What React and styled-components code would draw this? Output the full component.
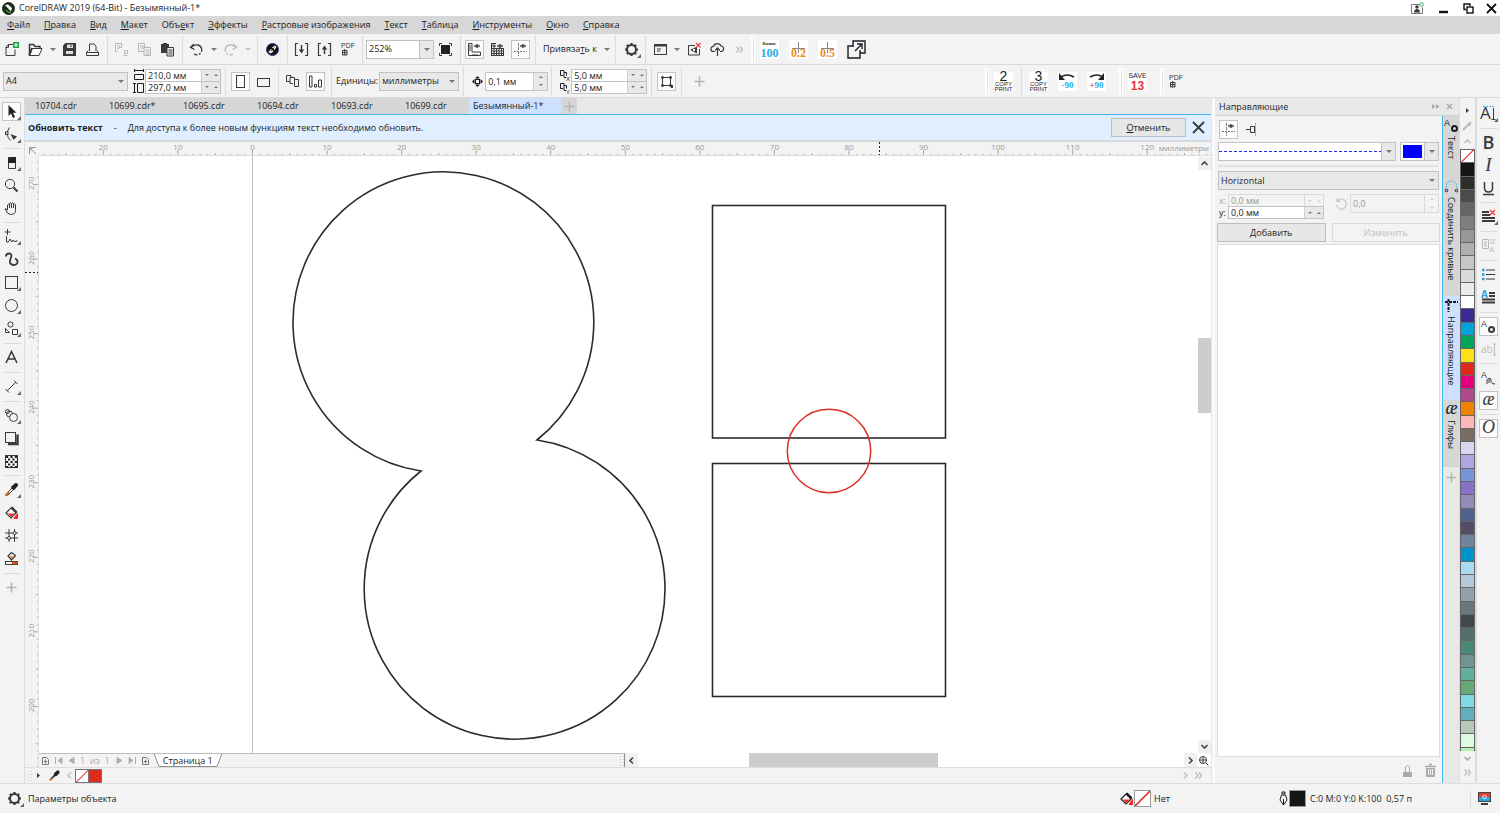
import React from 'react';
import styled, { createGlobalStyle, css } from 'styled-components';

const INK = '#3a3a3a';
const PALE = '#b9b9b9';
const LINE = '#c2c2c2';
const BLUE = '#42b8f2';

const Global = createGlobalStyle`
  *, *::before, *::after { box-sizing: border-box; }
  html, body, #root { height: 100%; }
  body { margin: 0; overflow: hidden; background: #f3f3f3; }
  body, button, input, select { font: 9px/12px "Open Sans", "Noto Sans", sans-serif; color: #1c1c24; }
  button { margin: 0; padding: 0; border: 0; background: none; white-space: nowrap; }
  svg { display: block; flex: none; }
`;

/* ---------- shell ---------- */

const Shell = styled.div`
  height: 100vh;
  display: flex;
  flex-direction: column;
`;
const TitleBar = styled.header`
  height: 16px;
  flex: none;
  background: #fff;
  display: flex;
  align-items: center;
  padding: 0 5px 0 2px;
`;
const AppTitle = styled.h1`
  margin: 0 auto 0 4px;
  font-size: 9px;
  font-weight: 400;
`;
const WindowButtons = styled.div`
  display: flex;
  align-items: center;
  gap: 14px;
`;
const MenuBar = styled.nav`
  height: 18px;
  flex: none;
  background: #d7d7d7;
  display: flex;
  align-items: center;
  gap: 14px;
  padding: 0 7px;
`;
const MenuItem = styled.button`
  font-size: 9px;
`;
const ToolBar = styled.div`
  height: ${(p) => p.$h}px;
  flex: none;
  display: flex;
  align-items: center;
  border-bottom: 1px solid #dadada;
  padding-left: ${(p) => p.$pad}px;
`;
const Main = styled.main`
  flex: 1;
  min-height: 0;
  display: flex;
`;

/* ---------- small parts ---------- */

const IconButton = styled.button`
  position: relative;
  flex: none;
  width: 19px;
  height: 19px;
  margin: 2px;
  display: flex;
  align-items: center;
  justify-content: center;
  border: 1px solid ${(p) => (p.$on ? '#c4c4c4' : 'transparent')};
  background: ${(p) => (p.$on ? '#fcfcfc' : 'transparent')};
  color: ${(p) => (p.disabled ? PALE : INK)};
  ${(p) => p.$fly && css`
    &::after {
      content: '';
      position: absolute;
      right: -1px;
      bottom: 0;
      border: 2px solid transparent;
      border-right-color: #666;
      border-bottom-color: #666;
    }
  `}
`;
const PlainButton = styled.button`
  flex: none;
  width: ${(p) => p.$w || 16}px;
  display: flex;
  align-items: center;
  justify-content: center;
  color: ${(p) => (p.$pale ? PALE : INK)};
`;
const Sep = styled.span`
  flex: none;
  width: ${(p) => p.$w || 6}px;
  height: ${(p) => p.$h || 29}px;
  display: flex;
  justify-content: center;
  &::before { content: ''; width: 1px; background: #dcdcdc; }
`;
const Grip = styled.span`
  flex: none;
  width: 4px;
  height: 27px;
  border: 1px solid #fff;
  border-left-width: 2px;
  background: #e2e2e2;
  margin-left: ${(p) => p.$gap || 0}px;
`;
const Rule = styled.span`
  flex: none;
  height: ${(p) => (p.$tight ? 5 : 6)}px;
  width: 17px;
  margin-left: 4px;
  display: flex;
  align-items: center;
  &::before { content: ''; flex: 1; height: 1px; background: #dcdcdc; }
`;
const Tri = styled.i`
  flex: none;
  width: 0;
  height: 0;
  border: ${(p) => p.$s || 3}px solid transparent;
  ${(p) => (p.$up
    ? css`border-top-width: 0; border-bottom-color: ${p.$c || '#777'};`
    : css`border-bottom-width: 0; border-top-color: ${p.$c || '#777'};`)}
`;
const DropArrow = ({ label, pale }) => (
  <PlainButton $w={11} aria-label={label} disabled={pale}><Tri $c={pale ? '#c8c8c8' : '#777'} /></PlainButton>
);

const SelectBox = styled.span`
  position: relative;
  flex: none;
  display: flex;
  width: ${(p) => p.$w};
  height: 19px;
  border: 1px solid ${LINE};
  background: ${(p) => (p.$white ? '#fff' : '#e8e8e8')};
  select {
    appearance: none;
    width: 100%;
    border: 0;
    background: none;
    padding: 0 12px 0 2px;
    outline: none;
  }
  &::before {
    content: '';
    position: absolute;
    inset: 0 0 0 auto;
    width: 14px;
    background: #e8e8e8;
    border-left: ${(p) => (p.$white ? `1px solid ${LINE}` : 0)};
    pointer-events: none;
  }
  &::after {
    content: '';
    position: absolute;
    right: 3px;
    top: 7px;
    border: 3px solid transparent;
    border-bottom-width: 0;
    border-top-color: #777;
    pointer-events: none;
  }
`;
const Select = ({ label, value, w, white, id }) => (
  <SelectBox $w={w} $white={white}>
    <select id={id} aria-label={label} defaultValue={value}><option>{value}</option></select>
  </SelectBox>
);

const FieldBox = styled.span`
  flex: none;
  display: flex;
  width: ${(p) => p.$w}px;
  height: ${(p) => (p.$tall ? 19 : 13)}px;
  border: 1px solid ${(p) => (p.$off ? '#dadada' : LINE)};
  background: ${(p) => (p.$off ? '#f3f3f3' : '#fff')};
  input {
    flex: 1;
    min-width: 0;
    border: 0;
    padding: 0 0 0 2px;
    background: none;
    outline: none;
    line-height: 11px;
  }
  input:disabled { color: #999; }
`;
const Spin = styled.span`
  flex: none;
  display: flex;
  flex-direction: ${(p) => (p.$tall ? 'column' : 'row')};
  width: ${(p) => (p.$tall ? 14 : 19)}px;
  border-left: 1px solid ${(p) => (p.$off ? '#dadada' : '#d0d0d0')};
  background: ${(p) => (p.$off ? '#f3f3f3' : '#e8e8e8')};
  button { flex: 1; display: flex; align-items: center; justify-content: center; }
`;
const NumField = ({ id, label, value, w, tall, off }) => {
  const c = off ? '#cfcfcf' : '#777';
  return (
    <FieldBox $w={w} $tall={tall} $off={off}>
      <input id={id} type="text" aria-label={label} defaultValue={value} disabled={off} />
      <Spin $tall={tall} $off={off}>
        <button aria-label={tall ? 'Больше' : 'Меньше'} disabled={off}><Tri $s={2} $up={tall} $c={c} /></button>
        <button aria-label={tall ? 'Меньше' : 'Больше'} disabled={off}><Tri $s={2} $up={!tall} $c={c} /></button>
      </Spin>
    </FieldBox>
  );
};
const FieldStack = styled.div`
  flex: none;
  display: flex;
  flex-direction: column;
  & > :nth-child(2) { margin-top: -1px; }
`;
const IconStack = styled.div`
  flex: none;
  display: flex;
  flex-direction: column;
  gap: 1px;
  margin: 0 0 0 ${(p) => p.$l || 0}px;
`;

/* ---------- icons ---------- */

const Ico = ({ s = 15, w, h, sw = 1, children, ...rest }) => (
  <svg width={w || s} height={h || s} viewBox={`0 0 ${w || s} ${h || s}`} overflow="visible" fill="none" stroke="currentColor" strokeWidth={sw} aria-hidden="true" {...rest}>
    {children}
  </svg>
);
const F = { fill: 'currentColor', stroke: 'none' };

const PdfIcon = () => (
  <Ico>
    <text x="1" y="6" fontSize="7" {...F} fontFamily="Liberation Sans, sans-serif">PDF</text>
    <path d="M2.5 8.500h4.500v4.500h-4.500zM4.700 7v6M2.500 10.700h4.500" />
  </Ico>
);
const EyeIcon = () => (
  <g strokeWidth=".8"><path d="M7 4q3-3 6 0q-3 3-6 0z" /><circle cx="10" cy="4" r="1" fill="currentColor" /></g>
);
const GearIcon = () => (
  <Ico>
    <circle cx="7.500" cy="7.500" r="4.500" strokeWidth="2" />
    <path strokeWidth="2.200" d="M7.500 1v2M7.500 12v2M1 7.500h2M12 7.500h2M2.900 2.900l1.400 1.400M10.700 10.700l1.400 1.400M2.900 12.100l1.400-1.400M10.700 4.300l1.400-1.400" />
  </Ico>
);
const DropperIcon = () => (
  <Ico>
    <path d="M2.500 11.500l6-6 1.500 1.500-6 6-2 .5z" fill="#eee" />
    <path d="M1.500 13.500l3.500-3.500" stroke="#d96a1c" strokeWidth="2" />
    <path d="M7.500 4l3.500 3.500" strokeWidth="1.500" />
    <path d="M9.500 5.500l2.500-2.500" strokeWidth="4" stroke="#222" strokeLinecap="round" />
  </Ico>
);
const BucketIcon = () => (
  <Ico>
    <path d="M2 8l5.500-5.500 5 5-5.500 5.500z" fill="#fff" strokeWidth="1.200" />
    <path d="M7.500 2.500l5 5" strokeWidth="2.500" />
    <path d="M4 8.500h6.500l-3.500 3.500z" fill="#f22" stroke="none" />
    <path d="M13.500 8.500v5h-3.500z" fill="#f22" stroke="#f22" />
  </Ico>
);
const GuidesIcon = () => (
  <Ico><path d="M5.500 1v13" strokeDasharray="3 1" stroke="#777" /><path d="M1 9.500h13" strokeDasharray="2 1" stroke="#777" /><EyeIcon /></Ico>
);
const Chevron = ({ d, c = '#444' }) => (
  <Ico s={9} sw={1.6} stroke={c}>
    <path d={{ up: 'M1.500 6l3-3 3 3', down: 'M1.500 3l3 3 3-3', left: 'M6 1.500l-3 3 3 3', right: 'M3 1.500l3 3-3 3' }[d]} />
  </Ico>
);
const DoubleChevron = () => (
  <Ico s={9} sw={1.2}><path d="M1.500 1.500l2.500 3-2.500 3M5 1.500l2.500 3-2.500 3" /></Ico>
);
const PlusIcon = () => <Ico s={11} sw={1.6} stroke="#b5b5b5"><path d="M5.500 .5v10M.5 5.500h10" /></Ico>;
const ScriptIcon = ({ children }) => (
  <svg width="19" height="19" viewBox="0 0 19 19" overflow="visible" aria-hidden="true">
    <rect width="19" height="19" fill="#fff" />
    {children}
  </svg>
);
const CrossIcon = ({ s = 9, c = INK, sw = 1.4 }) => (
  <Ico s={s} sw={sw} stroke={c}><path d={`M1 1L${s - 1} ${s - 1}M${s - 1} 1L1 ${s - 1}`} /></Ico>
);
const GlyphAE = ({ ch = 'æ' }) => (
  <Ico><text x="7.500" y="12" textAnchor="middle" {...F} fontSize="18" fontStyle="italic" fontFamily="Liberation Serif, serif">{ch}</text></Ico>
);
const PageAddIcon = () => (
  <Ico s={9}><path d="M1.500 1.500h4l2 2v5h-6zM4.500 3.500v4M2.800 5.500h3.500" stroke="#777" /></Ico>
);

const I = {
  new: <Ico><path d="M8 2.500h-4.500l-2.500 2.500v8.500h9v-6" /><path d="M3.500 2.500v3h-2.500" /><rect x="8" y="0" width="6" height="6" fill="#1ba64a" stroke="none" /><path d="M11 1v4M9 3h4" stroke="#fff" /></Ico>,
  open: <Ico><path d="M1.500 13v-10.500h4l1.500 2h5v2" strokeWidth="1.500" /><path d="M1 13.500l3-7h10l-3 7z" fill="#fff" /><path d="M1.500 13l2.500-7" strokeWidth="2" /></Ico>,
  save: <Ico><path d="M3.500 1h10.500v13h-13v-10.500z" {...F} /><rect x="5" y="2.500" width="6" height="3.500" fill="#ddd" stroke="none" /><rect x="4" y="9" width="7" height="3" fill="#ddd" stroke="none" /><path d="M9 2.500v2.500" /></Ico>,
  print: <Ico><path d="M4.500 9v-7h4.500l2 2v5M3 8.500l-1.500 2v3h12v-3l-1.500-2M1.500 10.500h12" /></Ico>,
  cut: <Ico><path d="M1.500 9.500v-8h6v4h-3M3 4h3M3 6.500h2M1.500 9.500h2" /><path d="M10.500 8.500h3v3h-3zM9.500 13.500h4" /></Ico>,
  copy: <Ico><path d="M1.500 1.500h6v8h-6zM3 4h4M3 6h4" /><path d="M7 5.500h6.500v8h-6.500zM8.500 8h4M8.500 10h4M8.500 12h4" fill="#f3f3f3" /></Ico>,
  paste: <Ico><rect x="1" y="2" width="8" height="9" {...F} /><rect x="3" y="1" width="4" height="2" {...F} /><path d="M7 5.500h6.500v8.500h-6.500zM8.500 8h4M8.500 10h4M8.500 12h4" fill="#f3f3f3" /></Ico>,
  undo: <Ico><path d="M5 2l-3.500 3.300 4 2.200" strokeWidth="1.300" /><path d="M2 5.300q3.500-3 7-2.300a5 5 0 0 1 1 9.300q-2.500 1.200-5-.3" strokeWidth="1.300" strokeDasharray="16 1.500 2 1.500" /></Ico>,
  redo: <Ico><path d="M10 2l3.500 3.300-4 2.200" strokeWidth="1.300" /><path d="M13 5.300q-3.500-3-7-2.300a5 5 0 0 0-1 9.300q2.500 1.200 5-.3" strokeWidth="1.300" strokeDasharray="16 1.500 2 1.500" /></Ico>,
  launch: <Ico><circle cx="7.500" cy="7.500" r="6" fill="#111" stroke="#4b2a8c" strokeWidth="1" /><path d="M7 5.500l3-2 1.500 1.500-2 3zM3.500 10l2.500-3 2.500 2.500-3 2z" fill="#fff" stroke="none" /><path d="M5.500 9.500l4-4" stroke="#111" strokeWidth=".8" /></Ico>,
  imp: <Ico><path d="M4 1.500h-2.500v12h2.500M11 1.500h2.500v12h-2.500" strokeWidth="1.200" /><path d="M7.500 3v7" strokeWidth="1.500" /><path d="M4.800 7.500h5.400l-2.700 4z" {...F} /></Ico>,
  exp: <Ico><path d="M4 1.500h-2.500v12h2.500M11 1.500h2.500v12h-2.500" strokeWidth="1.200" /><path d="M7.500 12v-7" strokeWidth="1.500" /><path d="M4.800 7.500h5.400l-2.700-4z" {...F} /></Ico>,
  full: <Ico><rect x="3" y="3" width="9" height="9" {...F} fill="#222" /><path d="M1.500 4v-2.500h2.500M11 1.500h2.500v2.500M1.500 11v2.500h2.500M11 13.500h2.500v-2.500" /></Ico>,
  rulers: <Ico><path d="M1.500 1.500h3.500v8.500h8.500v3.500h-12zM2 4h2M2 6h2M2 8h2M6 12v1M8 12v1M10 12v1" /><EyeIcon /></Ico>,
  grid: <Ico><path d="M1.500 1v13M4 1v13M6.500 6v8M9 6v8M11.500 6v8M13.500 6v8M1 1.500h5M1 4h5M1 6.500h13M1 9h13M1 11.500h13M1 13.500h13" /><EyeIcon /></Ico>,
  win: <Ico><rect x="1.500" y="2.500" width="12" height="10" /><path d="M1 3.500h13" strokeWidth="2" /><path d="M4 7h4M4 9h3" /></Ico>,
  unlink: <Ico><path d="M8 3.500h-6.500v9.500h11v-6" /><path d="M3 8l7-3.500v7z" {...F} /><circle cx="7" cy="8" r="1.200" fill="#fff" stroke="none" /><path d="M9 1l4.500 4.500M13.500 1l-4.500 4.500" stroke="#f04040" strokeWidth="1.300" /></Ico>,
  cloud: <Ico><path d="M5 9.500h-1.500a2.600 2.600 0 0 1 0-5.200a4 4 0 0 1 7.500-.3a2.800 2.800 0 0 1 .5 5.500h-1.500" strokeWidth="1.200" /><path d="M7.500 14v-7.500M5.200 8.500l2.300-2.500 2.300 2.500" strokeWidth="1.200" /></Ico>,
  portrait: <Ico><rect x="3.500" y="1.500" width="8" height="12" /></Ico>,
  landscape: <Ico><rect x="1.500" y="4.500" width="12" height="8" /></Ico>,
  allPages: <Ico><path d="M5 7.500h-3.500v-6h4.500v2" /><path d="M5.500 9.500h-.500v-6h4.500v2M8 9.500h-3" /><path d="M9.500 5.500h4v7h-4z" fill="#f3f3f3" /></Ico>,
  bars: <Ico><path d="M1.500 2v11h2.500v-11zM6.500 10.500h2v2.500h-2zM10.500 6h3v7h-3z" /></Ico>,
  treat: <Ico><path d="M3.500 3.500h8v8h-8z" /><path d="M2 3.500h3M3.500 2v3M10 3.500h3M11.500 2v3M2 11.500h3M3.500 10v3M10 11.500h3M11.500 10v3" strokeWidth="1.500" /><path d="M13 11v3" strokeWidth="2" /></Ico>,
  pick: <Ico><path d="M4.500 1v11l2.500-2.500 2 4.500 2-1-2-4.200h3.500z" fill="#222" stroke="none" /></Ico>,
  shape: <Ico><path d="M5.500 .5q-5 7 1 13" /><rect x="1.500" y="5" width="2.500" height="2.500" fill="#f3f3f3" /><path d="M6.500 7l6.500 2.500-3.500 3.500z" {...F} /></Ico>,
  crop: <Ico><path d="M4.500 2.500h7v11h-7z" /><path d="M4 8v-4q0-2 3-2h5v6z" fill="#222" stroke="none" /></Ico>,
  zoom: <Ico><circle cx="6" cy="6" r="4.600" /><path d="M9.500 9.500l4 4" strokeWidth="2" /></Ico>,
  hand: <Ico><path d="M3.500 9v-5q1-1.500 2 0v3v-4.500q1-1.500 2 0v4.500v-4.500q1-1.500 2 0v4.500v-3.500q1-1.500 2 0v6q0 4-5 4q-3 0-5.500-5.500q0-1.500 2.500 1z" /></Ico>,
  freehand: <Ico><path d="M3.500 0v6M.5 3h6M2.500 7v6h2l1.500-3 2 3 1-2 2 2 1-1.500 1.500 1" /></Ico>,
  artistic: <Ico><path d="M2 4.500q0-3 3-3q4 0 1.500 5.500q-2 5.500 3 6q4 0 4-3.500q0-2-2.500-3" strokeWidth="1.800" /></Ico>,
  rect: <Ico><rect x="1.500" y="1.500" width="12" height="12" /></Ico>,
  ellipse: <Ico><circle cx="7.500" cy="7.500" r="6" /></Ico>,
  poly: <Ico><circle cx="6.500" cy="3.500" r="2.600" /><path d="M1.500 7.500l4 4h-4zM8.500 8.500h5v5h-5z" /></Ico>,
  text: <Ico><path d="M2 13l5.500-11.500 5.500 11.500M4.500 9h6" strokeWidth="1.600" /></Ico>,
  dim: <Ico><path d="M3 12l9-9M1.500 10l3.500 3.500M10 1.500l3.500 3.500" /></Ico>,
  blend: <Ico><circle cx="3.500" cy="3.500" r="2" /><circle cx="5.500" cy="6" r="3" /><circle cx="9.500" cy="9.500" r="4" fill="#f3f3f3" /></Ico>,
  shadow: <Ico><path d="M4 13h9.500v-9.500" strokeWidth="2.500" /><rect x="1.500" y="1.500" width="10" height="10" fill="#f3f3f3" /></Ico>,
  check: <Ico><rect x="1.500" y="1.500" width="12" height="12" fill="#fff" /><path d="M2 3h12M4 5.500h10M2 8h12M4 10.500h10M2 13h12" strokeWidth="2.200" strokeDasharray="2.200 2.200" stroke="#222" /></Ico>,
  mesh: <Ico><path d="M5 1v13M10.500 1v13M1 5h13M1 10h13" /><circle cx="10.500" cy="5" r="1.500" fill="#fff" /><circle cx="5" cy="10" r="1.500" fill="#fff" /></Ico>,
  smart: <Ico><path d="M4 5l3.500-3.500 4 3-4 4.500z" strokeWidth="1.200" /><path d="M6 5l4 .5-2.500 3z" fill="#e87722" stroke="none" /><rect x="1.500" y="10.500" width="12" height="3" fill="#fff" /><path d="M8 12h5.500" stroke="#d9541c" strokeWidth="2.500" /></Ico>,
};

/* ---------- menu and toolbars ---------- */

const MENU = [['', 'Ф', 'айл'], ['', 'П', 'равка'], ['', 'В', 'ид'], ['', 'М', 'акет'], ['Объ', 'е', 'кт'], ['', 'Э', 'ффекты'],
  ['', 'Р', 'астровые изображения'], ['', 'Т', 'екст'], ['', 'Т', 'аблица'], ['', 'И', 'нструменты'], ['', 'О', 'кно'], ['', 'С', 'правка']];

const ScriptButton = styled.button`
  flex: none;
  width: 19px;
  margin: 0 5px;
`;
const SnapButton = styled.button`
  display: flex;
  align-items: center;
  gap: 7px;
  margin: 0 2px 0 5px;
`;
const FieldLabel = styled.label`
  flex: none;
  margin: 0 1px;
  color: ${(p) => (p.$off ? '#aaa' : '#1c1c24')};
`;
const NudgeMark = styled.span`
  margin: 0 2px 0 5px;
`;

const serif = { fontFamily: 'Liberation Serif, serif', fontWeight: 700, textAnchor: 'middle' };
const sans = { fontFamily: 'Liberation Sans, sans-serif', textAnchor: 'middle', fill: '#222' };

const Step = ({ v }) => (
  <ScriptIcon>
    <path d="M3 8.500h13M9.500 2v11" stroke="#888" />
    <text x="9.500" y="17" fontSize="12" fill="#f08a24" {...serif}>{v}</text>
  </ScriptIcon>
);
const Copies = ({ n }) => (
  <ScriptIcon>
    <text x="9.500" y="9" fontSize="14" {...sans}>{n}</text>
    <text x="9.500" y="14" fontSize="6" {...sans}>COPY</text>
    <text x="9.500" y="19" fontSize="6" {...sans}>PRINT</text>
  </ScriptIcon>
);
const Rotate = ({ left }) => (
  <ScriptIcon>
    <path d={left ? 'M3 5q6-4 13 0' : 'M3 5q7-4 13 0'} fill="none" stroke="#222" strokeWidth="1.500" />
    <path d={left ? 'M1 1v7h6z' : 'M17 1v7h-6z'} fill="#222" />
    <text x="9.500" y="16" fontSize="9" fill="#29abe2" {...serif}>
      <tspan fill={left ? '#29abe2' : '#e23a3a'}>{left ? '-' : '+'}</tspan>90
    </text>
  </ScriptIcon>
);

function StandardBar() {
  return (
    <ToolBar $h={31} $pad={1}>
      <IconButton aria-label="Создать">{I.new}</IconButton>
      <IconButton aria-label="Открыть">{I.open}</IconButton>
      <DropArrow label="Последние файлы" />
      <IconButton aria-label="Сохранить">{I.save}</IconButton>
      <IconButton aria-label="Печать">{I.print}</IconButton>
      <Sep />
      <IconButton aria-label="Вырезать" disabled>{I.cut}</IconButton>
      <IconButton aria-label="Копировать" disabled>{I.copy}</IconButton>
      <IconButton aria-label="Вставить">{I.paste}</IconButton>
      <Sep />
      <IconButton aria-label="Отменить действие">{I.undo}</IconButton>
      <DropArrow label="Список отмены" />
      <IconButton aria-label="Повторить" disabled>{I.redo}</IconButton>
      <DropArrow label="Список повтора" pale />
      <Sep $w={8} />
      <IconButton aria-label="Запуск">{I.launch}</IconButton>
      <Sep />
      <IconButton aria-label="Импорт">{I.imp}</IconButton>
      <IconButton aria-label="Экспорт">{I.exp}</IconButton>
      <IconButton aria-label="Опубликовать в PDF"><PdfIcon /></IconButton>
      <Sep $w={7} />
      <Select label="Масштаб" value="252%" w="68px" white />
      <IconButton aria-label="Полноэкранный просмотр">{I.full}</IconButton>
      <Sep />
      <IconButton $on aria-label="Показать линейки">{I.rulers}</IconButton>
      <IconButton aria-label="Показать сетку">{I.grid}</IconButton>
      <IconButton $on aria-label="Показать направляющие"><GuidesIcon /></IconButton>
      <Sep />
      <SnapButton><span>Привяза<u>т</u>ь к</span><Tri /></SnapButton>
      <Sep $w={8} />
      <IconButton $fly aria-label="Параметры"><GearIcon /></IconButton>
      <Sep />
      <IconButton aria-label="Окна настройки">{I.win}</IconButton>
      <DropArrow label="Список окон" />
      <IconButton aria-label="Средство запуска приложений">{I.unlink}</IconButton>
      <IconButton aria-label="Облако">{I.cloud}</IconButton>
      <PlainButton $w={22} $pale aria-label="Еще"><DoubleChevron /></PlainButton>
      <Grip />
      <ScriptButton aria-label="Копия 100">
        <ScriptIcon>
          <text x="9.500" y="5" fontSize="5" fill="#333" {...serif}>Копие</text>
          <text x="9.500" y="17" fontSize="12" fill="#29abe2" {...serif}>100</text>
        </ScriptIcon>
      </ScriptButton>
      <ScriptButton aria-label="Шаг 0.2"><Step v="0.2" /></ScriptButton>
      <ScriptButton aria-label="Шаг 0.5"><Step v="0.5" /></ScriptButton>
      <ScriptButton aria-label="Открыть в окне">
        <Ico s={19} sw={1.4}><path d="M6 6v-5h12v12h-5" /><path d="M13 10v8h-12v-12h6" /><path d="M8 11l7-7M10 4h5v5" /></Ico>
      </ScriptButton>
    </ToolBar>
  );
}

function PropertyBar() {
  return (
    <ToolBar $h={33} $pad={3}>
      <Select label="Размер страницы" value="A4" w="125px" />
      <IconStack $l={5}>
        <Ico w={12} h={12}><path d="M1 1.500h10M1.500 0v3M10.500 0v3M1.500 5.500h9v5h-9z" /></Ico>
        <Ico w={12} h={12}><path d="M1.500 1v10M0 1.500h3M0 10.500h3M4.500 1.500h6v9h-6z" /></Ico>
      </IconStack>
      <FieldStack>
        <NumField label="Ширина страницы" value="210,0 мм" w={76} />
        <NumField label="Высота страницы" value="297,0 мм" w={76} />
      </FieldStack>
      <Sep $w={8} />
      <IconButton $on aria-label="Книжная">{I.portrait}</IconButton>
      <IconButton aria-label="Альбомная">{I.landscape}</IconButton>
      <Sep />
      <IconButton aria-label="Все страницы">{I.allPages}</IconButton>
      <IconButton $on aria-label="Текущая страница">{I.bars}</IconButton>
      <Sep $w={8} />
      <FieldLabel htmlFor="units">Единицы:</FieldLabel>
      <Select id="units" value="миллиметры" w="80px" />
      <Sep $w={8} />
      <NudgeMark>
        <Ico s={11}><rect x="3.500" y="3.500" width="4" height="4" /><path d="M5.500 0l2.500 2.500h-5zM5.500 11l2.500-2.500h-5zM0 5.500l2.500-2.500v5zM11 5.500l-2.500-2.500v5z" {...F} /></Ico>
      </NudgeMark>
      <NumField label="Шаг смещения" value="0,1 мм" w={63} tall />
      <Sep $w={7} />
      <IconStack $l={4}>
        {['X', 'Y'].map((t) => (
          <Ico w={12} h={12} key={t}>
            <path d="M4 6.500h-2.500v-5h3.500v2M7 8.500h-2v-5h2.500v3" />
            <text x="7" y="12" fontSize="6" {...F} fontFamily="Liberation Sans, sans-serif">{t}</text>
          </Ico>
        ))}
      </IconStack>
      <FieldStack>
        <NumField label="Дубликат по X" value="5,0 мм" w={76} />
        <NumField label="Дубликат по Y" value="5,0 мм" w={76} />
      </FieldStack>
      <Sep $w={8} />
      <IconButton $on aria-label="Обрабатывать как заполненные">{I.treat}</IconButton>
      <Sep />
      <PlainButton $w={30} aria-label="Добавить элемент"><PlusIcon /></PlainButton>
      <Grip $gap={271} />
      <ScriptButton aria-label="Две копии"><Copies n="2" /></ScriptButton>
      <Sep />
      <ScriptButton aria-label="Три копии"><Copies n="3" /></ScriptButton>
      <ScriptButton aria-label="Повернуть на -90"><Rotate left /></ScriptButton>
      <ScriptButton aria-label="Повернуть на 90"><Rotate /></ScriptButton>
      <Grip $gap={8} />
      <ScriptButton aria-label="Сохранить в версии 13">
        <ScriptIcon>
          <text x="9.500" y="6" fontSize="7" {...sans}>SAVE</text>
          <text x="9.500" y="18" fontSize="12" {...sans} fill="#e8303a" fontWeight="700">13</text>
        </ScriptIcon>
      </ScriptButton>
      <Grip $gap={8} />
      <IconButton aria-label="Сохранить PDF"><PdfIcon /></IconButton>
    </ToolBar>
  );
}

const SideTools = styled.aside`
  flex: none;
  width: ${(p) => p.$w}px;
  padding-top: ${(p) => p.$top}px;
  border-${(p) => p.$edge}: 1px solid #dcdcdc;
  display: flex;
  flex-direction: column;
  overflow: hidden;
`;

const TOOLS = [
  ['Выбор', I.pick, 1, 1], ['Форма', I.shape, 1], 'tight',
  ['Обрезка', I.crop, 1], ['Масштаб', I.zoom], ['Панорама', I.hand], 'tight',
  ['Свободная форма', I.freehand, 1], ['Художественное оформление', I.artistic], ['Прямоугольник', I.rect, 1], ['Эллипс', I.ellipse, 1], ['Многоугольник', I.poly, 1], 'rule',
  ['Текст', I.text], 'rule', ['Размер', I.dim, 1], 'rule',
  ['Перетекание', I.blend, 1], ['Тень', I.shadow], ['Прозрачность', I.check], 'tight',
  ['Пипетка', <DropperIcon />, 1], ['Заливка', <BucketIcon />], ['Сетка', I.mesh], ['Интеллектуальная заливка', I.smart], 'rule',
  ['Добавить инструмент', <PlusIcon />],
];
const AGear = () => (
  <Ico><text x="0" y="8" fontSize="9" {...F} fontFamily="Liberation Sans, sans-serif">A</text><circle cx="10.500" cy="10.500" r="2.500" strokeWidth="2" /></Ico>
);
const TEXT_TOOLS = [
  ['Шрифт', <Ico s={17}><text x="0" y="14" fontSize="17" {...F} fontFamily="Open Sans, sans-serif">A</text><path d="M13.500 3v11M11.500 14.500h4" /><path d="M3 1.500h11" stroke="#3bb0e8" strokeDasharray="2 1" /></Ico>, 1], 'rule',
  ['Полужирный', <Ico s={17}><text x="8.500" y="15" textAnchor="middle" {...F} fontSize="18" fontWeight="600" fontFamily="Open Sans, sans-serif">B</text></Ico>],
  ['Курсив', <Ico s={17}><text x="8.500" y="14" textAnchor="middle" {...F} fontSize="19" fontStyle="italic" fontFamily="Liberation Serif, serif">I</text></Ico>],
  ['Подчеркнутый', <Ico s={17}><path d="M4.500 2v6q0 4 4 4t4-4v-6M3 14.500h11" strokeWidth="1.500" /></Ico>], 'tight',
  ['Выравнивание', <Ico><path d="M1 3h7M1 6h8M1 9h13M1 12h13" strokeWidth="2" /><path d="M9 1l5 5M14 1l-5 5" stroke="#f04040" strokeWidth="1.400" /></Ico>, 1], 'rule',
  ['Формат', <Ico><path d="M1.500 1.500h6v9h-6zM3 4h3M3 6h3M3 8h3M9 2h5M9 5h5" /><text x="8" y="14" fontSize="8" {...F}>A</text></Ico>, 0, 0, 1], 'rule',
  ['Список', <Ico><path d="M1 3h2.500M1 7.500h2.500M1 12h2.500" stroke="#2a9fe0" strokeWidth="2.500" /><path d="M5 3h9M5 7.500h9M5 12h9" strokeWidth="1.200" /></Ico>],
  ['Буквица', <Ico><text x="0" y="8" fontSize="10" fontWeight="700" fill="#2a9fe0" stroke="none">A</text><path d="M8 3h6M8 6h6M1 9.500h13M1 12.500h13" strokeWidth="1.800" /></Ico>], 'rule',
  ['Свойства текста', <AGear />, 0, 1],
  ['Редактировать текст', <Ico><text x="0" y="11" fontSize="10" {...F} fontFamily="Open Sans, sans-serif">ab</text><path d="M13.500 2v11M12 2h3M12 13h3" /></Ico>, 0, 0, 1], 'tight',
  ['Текст вдоль пути', <Ico><text x="0" y="8" fontSize="9" {...F} fontFamily="Liberation Sans, sans-serif">A</text><path d="M6 14v-4q2-3 4-1q-1 5 4 5M8 9v4" /></Ico>],
  ['Глифы', <GlyphAE />, 0, 1], 'tight',
  ['OpenType', <GlyphAE ch="O" />, 0, 1],
];
const toolList = (list) => list.map((t, i) => (typeof t === 'string'
  ? <Rule key={i} $tight={t === 'tight'} />
  : <IconButton key={i} aria-label={t[0]} $fly={t[2]} $on={t[3]} disabled={!!t[4]}>{t[1]}</IconButton>));

/* ---------- document ---------- */

const DocColumn = styled.section`
  flex: 1;
  min-width: 0;
  display: flex;
  flex-direction: column;
`;
const DocTabs = styled.div`
  height: 16px;
  flex: none;
  display: flex;
  background: #e8e8e8;
`;
const DocTab = styled.button`
  width: ${(p) => (p.$on ? 92 : 74)}px;
  padding-left: ${(p) => (p.$on ? 4 : 10)}px;
  text-align: left;
  background: ${(p) => (p.$on ? '#cde0ff' : '#d6d6d6')};
`;
const AddTab = styled.button`
  width: 16px;
  background: #d6d6d6;
  display: flex;
  align-items: center;
  justify-content: center;
`;
const Message = styled.div`
  height: 26px;
  flex: none;
  display: flex;
  align-items: center;
  border-top: 1px solid ${BLUE};
  background: #dfefff;
  padding: 0 0 0 3px;
`;
const MessageText = styled.p`
  margin: 0 auto 0 0;
  display: flex;
  gap: 11px;
`;
const PushButton = styled.button`
  height: 19px;
  flex: ${(p) => (p.$w ? 'none' : 1)};
  width: ${(p) => p.$w}px;
  border: 1px solid ${(p) => (p.disabled ? '#dadada' : '#bdbdbd')};
  background: ${(p) => (p.disabled ? '#f3f3f3' : '#e7e7e7')};
  color: ${(p) => (p.disabled ? '#c2c2c2' : '#1c1c24')};
`;
const Strip = styled.div`
  height: 2px;
  flex: none;
  background: #d8d8d8;
`;
const Desk = styled.div`
  flex: 1;
  min-height: 0;
  display: grid;
  grid-template-columns: 14px 1fr;
  grid-template-rows: 14px 1fr 14px;
`;
const Corner = styled.div`
  padding: 4px 0 0 3px;
`;
const RulerH = styled.div`
  min-width: 0;
  overflow: hidden;
  border-bottom: 1px solid #dedede;
  position: relative;
`;
const RulerUnit = styled.span`
  position: absolute;
  right: 2px;
  top: 0;
  font-size: 8px;
  color: #999;
  background: #f3f3f3;
  height: 9px;
  line-height: 11px;
`;
const RulerV = styled.div`
  grid-row: 2 / 4;
  overflow: hidden;
  border-right: 1px solid #dedede;
`;
const CanvasRow = styled.div`
  min-width: 0;
  min-height: 0;
  display: flex;
  background: #fff;
`;
const Canvas = styled.div`
  flex: 1;
  min-width: 0;
  overflow: hidden;
`;
const ScrollV = styled.div`
  width: 13px;
  flex: none;
  display: grid;
  grid-template-rows: 1px 13px 168fr 75fr 328fr 13px;
`;
const ScrollButton = styled.button`
  background: #f0f0f0;
  display: flex;
  align-items: center;
  justify-content: center;
`;
const Thumb = styled.div`
  background: #cdcdcd;
`;
const BottomRow = styled.div`
  display: flex;
  min-width: 0;
  background: #fff;
`;
const PageBar = styled.div`
  width: 50%;
  display: flex;
  align-items: center;
  background: #f3f3f3;
  border-top: 1px solid #bdbdbd;
  border-right: 1px solid #8a8a8a;
  padding-left: 2px;
  color: #a8a8a8;
  overflow: hidden;
`;
const PageTab = styled.button`
  position: relative;
  margin-left: 3px;
  width: 68px;
  height: 14px;
  svg { position: absolute; inset: -1px 0 auto 0; }
  span { position: relative; }
`;
const ScrollH = styled.div`
  flex: 1;
  display: grid;
  grid-template-columns: 13px 111fr 188fr 246fr 13px 14px;
`;
const ColorStrip = styled.div`
  height: 16px;
  flex: none;
  border-top: 1px solid #dedede;
  display: flex;
  align-items: center;
  padding: 0 6px 0 2px;
`;
const DotGrip = styled.span`
  width: 5px;
  height: 12px;
  background: radial-gradient(circle, #ccc 1px, transparent 1px) 0 0 / 3px 3px;
`;
const MiniSwatch = styled.button`
  width: 14px;
  height: 14px;
  border: 1px solid #777;
  background: ${(p) => p.$c};
  & + & { margin-left: -1px; }
`;
const Spacer = styled.span`
  flex: 1;
`;

const MM = 7.456;
const HorizontalRuler = () => {
  const marks = [];
  for (let v = -28; v <= 129; v += 1) {
    const x = 213.5 + v * MM;
    const t = v % 10 === 0 ? 5 : v % 5 === 0 ? 2 : 1;
    marks.push(<path key={v} d={`M${x} 13v${-t}`} stroke="#aaa" />);
    if (v % 10 === 0) marks.push(<text key={`t${v}`} x={x} y="8" textAnchor="middle" fontSize="8" fill="#999">{Math.abs(v)}</text>);
  }
  return (
    <svg width="2000" height="13" aria-hidden="true">{marks}<path d="M840.500 0v13" stroke="#222" strokeDasharray="2 2" /></svg>
  );
};
const VerticalRuler = () => {
  const marks = [];
  for (let v = 273; v >= 100; v -= 1) {
    const y = 28.5 + (270 - v) * MM;
    const t = v % 10 === 0 ? 5 : v % 5 === 0 ? 2 : 1;
    marks.push(<path key={v} d={`M13 ${y}h${-t}`} stroke="#aaa" />);
    if (v % 10 === 0) marks.push(<text key={`t${v}`} transform={`translate(9 ${y - 1}) rotate(-90)`} textAnchor="middle" fontSize="8" fill="#999">{v}</text>);
  }
  return (
    <svg width="13" height="1300" aria-hidden="true">{marks}<path d="M0 116.500h13" stroke="#222" strokeDasharray="2 2" /></svg>
  );
};
const Drawing = () => (
  <svg width="100%" height="100%" fill="none" stroke="#2b2b2b" strokeWidth="1.600" role="img" aria-label="Рисунок">
    <path d="M213.500 0V2000" stroke="#bdbdbd" strokeWidth="1" />
    <path d="M382 315A150.400 150.400 0 1 1 498 284A150.400 150.400 0 1 1 382 315Z" />
    <rect x="673.500" y="49.500" width="233" height="232.500" />
    <rect x="673.500" y="307.500" width="233" height="233" />
    <circle cx="790" cy="295" r="41.700" stroke="#dc2e22" strokeWidth="1.500" />
  </svg>
);

const Nav = ({ d, label, w }) => (
  <PlainButton $w={w} aria-label={label}><Ico s={9} stroke="#b0b0b0" fill="#b0b0b0"><path d={d} /></Ico></PlainButton>
);
const PageCount = styled.span`
  margin: 0 4px;
  white-space: pre;
`;

function Document() {
  return (
    <DocColumn>
      <DocTabs>
        {['10704.cdr', '10699.cdr*', '10695.cdr', '10694.cdr', '10693.cdr', '10699.cdr'].map((t, i) => <DocTab key={i}>{t}</DocTab>)}
        <DocTab $on>Безымянный-1*</DocTab>
        <AddTab aria-label="Новый документ"><PlusIcon /></AddTab>
      </DocTabs>
      <Message>
        <MessageText>
          <b>Обновить текст</b><span>-</span>
          <span>Для доступа к более новым функциям текст необходимо обновить.</span>
        </MessageText>
        <PushButton $w={75}><u>О</u>тменить</PushButton>
        <PlainButton $w={25} aria-label="Закрыть сообщение"><CrossIcon s={13} sw={1.8} /></PlainButton>
      </Message>
      <Strip />
      <Desk>
        <Corner><Ico s={9} stroke="#999"><path d="M1 1.500h7M1.500 1v7M2 2l6 6M2 5v-3h3" /></Ico></Corner>
        <RulerH><HorizontalRuler /><RulerUnit>миллиметры</RulerUnit></RulerH>
        <RulerV><VerticalRuler /></RulerV>
        <CanvasRow>
          <Canvas><Drawing /></Canvas>
          <ScrollV>
            <span />
            <ScrollButton aria-label="Вверх"><Chevron d="up" /></ScrollButton>
            <span /><Thumb /><span />
            <ScrollButton aria-label="Вниз"><Chevron d="down" /></ScrollButton>
          </ScrollV>
        </CanvasRow>
        <BottomRow>
          <PageBar>
            <PlainButton $w={9} aria-label="Добавить страницу в начало"><PageAddIcon /></PlainButton>
            <Nav w={17} label="Первая страница" d="M1.500 1v7M8 1.500v6l-4-3z" />
            <Nav w={9} label="Предыдущая страница" d="M7 1.500v6l-5-3z" />
            <PageCount>1  из  1</PageCount>
            <Nav w={11} label="Следующая страница" d="M2 1.500v6l5-3z" />
            <Nav w={15} label="Последняя страница" d="M7.500 1v7M1 1.500v6l4-3z" />
            <PlainButton $w={11} aria-label="Добавить страницу в конец"><PageAddIcon /></PlainButton>
            <PageTab>
              <Ico w={68} h={14} stroke="#8c8c8c"><path d="M0 .5l5 13h58l5-13" fill="#fff" /></Ico>
              <span>Страница 1</span>
            </PageTab>
            <Spacer />
            <DotGrip />
          </PageBar>
          <ScrollH>
            <ScrollButton aria-label="Влево"><Chevron d="left" /></ScrollButton>
            <span /><Thumb /><span />
            <ScrollButton aria-label="Вправо"><Chevron d="right" /></ScrollButton>
            <PlainButton $w={13} aria-label="Навигатор"><Ico s={11}><circle cx="5" cy="5" r="3.500" /><path d="M5 2v6M2 5h6M8 8l2.500 2.500" /></Ico></PlainButton>
          </ScrollH>
        </BottomRow>
      </Desk>
      <ColorStrip>
        <DotGrip />
        <PlainButton $w={13} aria-label="Меню палитры"><Ico s={7}><path d="M2 1v5l3-2.500z" {...F} /></Ico></PlainButton>
        <PlainButton $w={18} aria-label="Пипетка"><Ico s={11} viewBox="0 0 15 15"><path d="M2 13l8-8" strokeWidth="2.500" /><path d="M1 14l3-3" stroke="#d96a1c" strokeWidth="2.500" /><path d="M9 6l3-3" strokeWidth="5" stroke="#222" strokeLinecap="round" /></Ico></PlainButton>
        <PlainButton $w={12} aria-label="Назад"><Chevron d="left" c="#c4c4c4" /></PlainButton>
        <MiniSwatch aria-label="Нет цвета" $c="linear-gradient(135deg, #fff 46%, #ee6a6a 48%, #ee6a6a 54%, #fff 56%)" />
        <MiniSwatch aria-label="Красный" $c="#de2a1c" />
        <Spacer />
        <PlainButton $w={12} aria-label="Вперед"><Chevron d="right" c="#c4c4c4" /></PlainButton>
        <PlainButton $w={14} $pale aria-label="Развернуть"><DoubleChevron /></PlainButton>
      </ColorStrip>
    </DocColumn>
  );
}

/* ---------- docker ---------- */

const Gutter = styled.div`
  width: 4px;
  flex: none;
  border-left: 1px solid #e4e4e4;
  background: #fafafa;
`;
const Docker = styled.aside`
  width: 244px;
  flex: none;
  display: flex;
  flex-direction: column;
`;
const DockerHead = styled.div`
  height: 18px;
  flex: none;
  display: flex;
  align-items: center;
  background: #e8e8e8;
  border-bottom: 1px solid #d4d4d4;
  padding: 0 3px 0 4px;
`;
const DockerTitle = styled.h2`
  margin: 0 auto 0 0;
  font-size: 9px;
  font-weight: 400;
`;
const DockerRow = styled.div`
  flex: 1;
  min-height: 0;
  display: flex;
`;
const DockerBody = styled.div`
  flex: 1;
  min-width: 0;
  display: flex;
  flex-direction: column;
  padding: 2px 2px 0 2px;
`;
const Line = styled.div`
  flex: none;
  display: flex;
  align-items: ${(p) => p.$align || 'center'};
  gap: ${(p) => p.$gap || 0}px;
  margin: ${(p) => p.$top || 0}px 0 0 0;
  padding: 0 ${(p) => (p.$flush ? 0 : 1)}px;
`;
const Divider = styled.div`
  height: 2px;
  flex: none;
  margin: 4px 1px;
  background: #e2e2e2;
`;
const StyleCombo = styled.button`
  display: flex;
  align-items: center;
  height: 19px;
  width: ${(p) => p.$w};
  flex: ${(p) => (p.$w ? 'none' : 1)};
  border: 1px solid ${LINE};
  background: #fff;
`;
const DashSample = styled.span`
  flex: 1;
  height: 1px;
  background: repeating-linear-gradient(90deg, #2222ff 0 3px, transparent 3px 5px);
`;
const BlueSample = styled.span`
  flex: 1;
  height: 13px;
  margin: 0 2px;
  background: #0000ff;
`;
const ComboEnd = styled.span`
  width: 14px;
  height: 100%;
  background: #e8e8e8;
  border-left: 1px solid ${LINE};
  display: flex;
  align-items: center;
  justify-content: center;
`;
const CoordRow = styled.div`
  display: flex;
  align-items: center;
  justify-content: space-between;
  width: 106px;
`;
const GuideList = styled.ul`
  flex: 1;
  margin: 2px 0 0;
  padding: 0;
  list-style: none;
  background: #fff;
  border: 1px solid #dedede;
`;
const DockerFoot = styled.div`
  height: 26px;
  flex: none;
  display: flex;
  align-items: center;
  justify-content: flex-end;
  gap: 7px;
  padding-right: 2px;
`;
const DockTabs = styled.div`
  width: 17px;
  flex: none;
  border-left: 1px solid ${BLUE};
  background: #e8e8e8;
  display: flex;
  flex-direction: column;
`;
const DockTab = styled.button`
  height: ${(p) => p.$h}px;
  width: 16px;
  flex: none;
  display: flex;
  flex-direction: column;
  align-items: center;
  gap: 3px;
  padding-top: 2px;
  background: ${(p) => (p.$on ? '#cde0ff' : '#d6d6d6')};
  span { writing-mode: vertical-rl; }
`;
const AddDock = styled.button`
  height: 20px;
  display: flex;
  align-items: center;
  justify-content: center;
`;

function GuidesDocker() {
  return (
    <Docker>
      <DockerHead>
        <DockerTitle>Направляющие</DockerTitle>
        <PlainButton $w={14} aria-label="Свернуть"><Ico s={9} fill="#aaa" stroke="none"><path d="M1 2l3.500 2.500-3.500 2.500zM5 2l3.500 2.500-3.500 2.500z" /></Ico></PlainButton>
        <PlainButton $w={14} aria-label="Закрыть"><CrossIcon s={7} c="#aaa" /></PlainButton>
      </DockerHead>
      <DockerRow>
        <DockerBody>
          <Line $flush>
            <IconButton $on aria-label="Показать направляющие"><GuidesIcon /></IconButton>
            <IconButton aria-label="Привязка к направляющим"><Ico w={11} h={13}><path d="M0 6.500h4M4.500 3.500h4v6h-4z" /><path d="M9.500 0v13" stroke="#64c0f0" /></Ico></IconButton>
          </Line>
          <Line $gap={4} $top={1}>
            <StyleCombo aria-label="Стиль линии"><DashSample /><ComboEnd><Tri /></ComboEnd></StyleCombo>
            <StyleCombo $w="39px" aria-label="Цвет линии"><BlueSample /><ComboEnd><Tri /></ComboEnd></StyleCombo>
          </Line>
          <Divider />
          <Line><Select label="Тип направляющей" value="Horizontal" w="100%" /></Line>
          <Line $top={4} $gap={11} $align="flex-start">
            <FieldStack>
              <CoordRow><FieldLabel $off htmlFor="gx">x:</FieldLabel><NumField id="gx" value="0,0 мм" w={96} off /></CoordRow>
              <CoordRow><FieldLabel htmlFor="gy">y:</FieldLabel><NumField id="gy" value="0,0 мм" w={96} /></CoordRow>
            </FieldStack>
            <Line $gap={2} $flush>
              <Ico s={13} stroke="#c8c8c8"><path d="M2.500 4a5 5 0 1 1-1 4M2 1v3.500h3.500" strokeWidth="1.200" /></Ico>
              <NumField label="Угол" value="0,0" w={89} tall off />
            </Line>
          </Line>
          <Line $top={4} $gap={6} $flush>
            <PushButton>Добавить</PushButton>
            <PushButton disabled>Изменить</PushButton>
          </Line>
          <GuideList aria-label="Список направляющих" />
          <DockerFoot>
            <PlainButton aria-label="Заблокировать"><Ico w={11} h={13} stroke="#aaa"><path d="M3.500 8v-5q2-3 4 0v5" /><rect x="1" y="8" width="9" height="5" fill="#aaa" stroke="none" /></Ico></PlainButton>
            <PlainButton aria-label="Удалить"><Ico w={11} h={13} stroke="#aaa"><path d="M0 2.500h11M4 .5h3" strokeWidth="1.500" /><path d="M1.500 4.500h8v8h-8z" fill="#aaa" /><path d="M3.500 5v6M5.500 5v6M7.500 5v6" stroke="#f3f3f3" /></Ico></PlainButton>
          </DockerFoot>
        </DockerBody>
        <DockTabs>
          <DockTab $h={61}><AGear /><span>Текст</span></DockTab>
          <DockTab $h={119}><Ico><path d="M2 9q0-7 5.500-7t5.500 7" stroke="#4ab4ea" strokeDasharray="2 1" /><circle cx="2.500" cy="11.500" r="1.300" /><circle cx="12.500" cy="11.500" r="1.300" /></Ico><span>Соединить кривые</span></DockTab>
          <DockTab $h={104} $on><Ico><path d="M4.500 1v13" strokeWidth="2" strokeDasharray="3 1" /><path d="M1 4h13" strokeWidth="2" strokeDasharray="3 1" /></Ico><span>Направляющие</span></DockTab>
          <DockTab $h={67}><GlyphAE /><span>Глифы</span></DockTab>
          <AddDock aria-label="Добавить панель"><PlusIcon /></AddDock>
        </DockTabs>
      </DockerRow>
    </Docker>
  );
}

/* ---------- palette ---------- */

const PALETTE = ['#131615', '#2e2f2d', '#4b4b4b', '#656563', '#7e7e7e', '#979797', '#adafb0', '#c5c7c6', '#d9dcdb', '#ebebeb', '#ffffff',
  '#3a2a93', '#00a2d9', '#00a55c', '#fbe117', '#de291b', '#e5007d', '#b0488c', '#f08200', '#ffb8ba', '#7c6c62', '#dbd5f3', '#b0a5e2',
  '#7694d6', '#8670ca', '#9489b8', '#50638f', '#554d66', '#71849c', '#0092cf', '#a9dbf2', '#b5c8d7', '#90a1ab', '#697780', '#3f484a',
  '#53706c', '#498877', '#719493', '#62b09c', '#67a878', '#81dae2', '#63b0bc', '#b6c9b8', '#defae0'];

const Palette = styled.aside`
  width: 17px;
  flex: none;
  border: solid #dcdcdc;
  border-width: 0 1px;
  display: flex;
  flex-direction: column;
  align-items: center;
`;
const PaletteHead = styled.div`
  height: 51px;
  flex: none;
  display: flex;
  flex-direction: column;
  align-items: center;
  justify-content: space-around;
  padding-top: 6px;
`;
const Swatches = styled.div`
  flex: 1;
  width: 15px;
  min-height: 0;
  display: flex;
  flex-direction: column;
  border: solid #666;
  border-width: 1px 1px 0;
`;
const Swatch = styled.button`
  flex: ${(p) => (p.$last ? '0 0 3px' : '1 1 0')};
  min-height: 0;
  background: ${(p) => p.$c};
  border-bottom: ${(p) => (p.$last ? 0 : '1px solid #666')};
`;
const PaletteFoot = styled.div`
  height: 32px;
  flex: none;
  display: flex;
  flex-direction: column;
  align-items: center;
  justify-content: space-around;
  padding-bottom: 4px;
`;

/* ---------- status ---------- */

const StatusBar = styled.footer`
  height: 30px;
  flex: none;
  border-top: 1px solid #dedede;
  display: flex;
  align-items: center;
  padding: 0 4px 0 3px;
`;
const StatusText = styled.span`
  margin: 0 0 0 ${(p) => p.$l}px;
  width: ${(p) => (p.$w ? `${p.$w}px` : 'auto')};
  white-space: pre;
`;
const ColorBox = styled.span`
  width: 17px;
  height: 17px;
  border: 1px solid #999;
  background: ${(p) => p.$c};
`;

export default function App() {
  return (
    <Shell>
      <Global />
      <TitleBar>
        <Ico s={13}><circle cx="6.500" cy="6.500" r="6" fill="#16301a" stroke="#16301a" /><path d="M3 3l6 6.500 1-3.500-4-3.500z" fill="#fff" stroke="none" /><path d="M4 8q2 3 5 2.500" stroke="#6fbf44" /></Ico>
        <AppTitle>CorelDRAW 2019 (64-Bit) - Безымянный-1*</AppTitle>
        <WindowButtons>
          <PlainButton $w={13} aria-label="Учетная запись"><Ico s={13}><path d="M.5 2.500h9M.5 2.500v9h11v-6" stroke="#777" /><circle cx="6" cy="5" r="1.800" {...F} /><path d="M3 10.500q0-3.500 3-3.500t3 3.500z" {...F} /><circle cx="10.500" cy="2.500" r="1.800" stroke="#3aa860" fill="#fff" /></Ico></PlainButton>
          <PlainButton $w={11} aria-label="Свернуть окно"><Ico s={11}><path d="M1 9h9" strokeWidth="2.400" stroke="#111" /></Ico></PlainButton>
          <PlainButton $w={11} aria-label="Восстановить"><Ico s={11} sw={1.4} stroke="#111"><path d="M3 6.500h-2v-5.500h6v2" /><rect x="4" y="4" width="6" height="6" /></Ico></PlainButton>
          <PlainButton $w={7} aria-label="Закрыть окно"><CrossIcon s={11} c="#111" sw={1.8} /></PlainButton>
        </WindowButtons>
      </TitleBar>
      <MenuBar aria-label="Главное меню">
        {MENU.map(([a, k, b]) => <MenuItem key={k + b}>{a}<u>{k}</u>{b}</MenuItem>)}
      </MenuBar>
      <StandardBar />
      <PropertyBar />
      <Main>
        <SideTools $w={25} $top={2} $edge="right">{toolList(TOOLS)}</SideTools>
        <Document />
        <Gutter />
        <GuidesDocker />
        <Palette>
          <PaletteHead>
            <PlainButton $w={9} aria-label="Меню палитры"><Ico s={7}><path d="M2 1v5l3-2.500z" {...F} /></Ico></PlainButton>
            <PlainButton $w={11} $pale aria-label="Пипетка"><Ico s={11}><path d="M1 10l6-6M6 3l2.500 2.500M8 3l1-1" strokeWidth="2" /></Ico></PlainButton>
            <PlainButton $w={9} aria-label="Прокрутить вверх"><Chevron d="up" c="#c4c4c4" /></PlainButton>
          </PaletteHead>
          <Swatches>
            <Swatch aria-label="Нет цвета" $c="linear-gradient(135deg, #fff 45%, #ee5a5a 47%, #ee5a5a 53%, #fff 55%)" />
            {PALETTE.map((c) => <Swatch key={c} aria-label={c} $c={c} />)}
            <Swatch $last aria-label="#b2f2b5" $c="#b2f2b5" />
          </Swatches>
          <PaletteFoot>
            <PlainButton $w={9} aria-label="Прокрутить вниз"><Chevron d="down" c="#aaa" /></PlainButton>
            <PlainButton $w={9} $pale aria-label="Развернуть палитру"><DoubleChevron /></PlainButton>
          </PaletteFoot>
        </Palette>
        <SideTools $w={24} $top={4} $edge="left">{toolList(TEXT_TOOLS)}</SideTools>
      </Main>
      <StatusBar>
        <IconButton $fly aria-label="Параметры объекта"><GearIcon /></IconButton>
        <StatusText $l={2}>Параметры объекта</StatusText>
        <Spacer />
        <BucketIcon />
        <ColorBox $c="linear-gradient(135deg, #fff 46%, #d33 47%, #d33 53%, #fff 54%)" />
        <StatusText $l={3} $w={124}>Нет</StatusText>
        <Ico w={11} h={15}><path d="M4 1h3v2h-3zM3.500 4h4l1.500 5-3.500 5-3.500-5zM5.500 14v-6" /></Ico>
        <ColorBox $c="#141615" />
        <StatusText $l={4} $w={157}>C:0 M:0 Y:0 K:100  0,57 п</StatusText>
        <Sep $h={16} />
        <IconButton aria-label="Цветопроба"><Ico><rect x="1" y="1" width="13" height="10" fill="#444" stroke="none" /><rect x="2" y="2" width="11" height="4" fill="#f23a2a" stroke="none" /><rect x="2" y="6" width="11" height="4" fill="#2aa4e8" stroke="none" /><circle cx="7.500" cy="6" r="1.800" stroke="#eee" /><path d="M4 13h7" strokeWidth="2" /></Ico></IconButton>
      </StatusBar>
    </Shell>
  );
}
